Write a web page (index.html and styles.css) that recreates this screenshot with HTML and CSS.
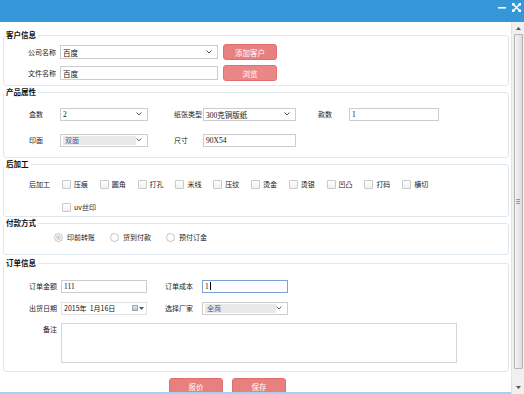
FILE: index.html
```html
<!DOCTYPE html>
<html lang="zh-CN">
  <head>
    <meta charset="UTF-8" />
    <title>订单</title>
    <link rel="stylesheet" href="styles.css">
  </head>
  <body>
    <div class="window">
      <div class="titlebar">
        <svg class="tb-icon" width="9" height="9" viewBox="0 0 9 9"><rect x="0" y="4" width="8" height="1.6" fill="#fff"/></svg>
        <svg class="tb-icon" width="9" height="9" viewBox="0 0 9 9"><path d="M1 1 L8 8 M8 1 L1 8" stroke="#fff" stroke-width="1.6"/><rect x="0" y="0" width="2.5" height="2.5" fill="#fff"/><rect x="6.5" y="0" width="2.5" height="2.5" fill="#fff"/><rect x="0" y="6.5" width="2.5" height="2.5" fill="#fff"/><rect x="6.5" y="6.5" width="2.5" height="2.5" fill="#fff"/></svg>
      </div>
      <div class="main">
        <div class="content">
          <!-- 客户信息 -->
          <fieldset class="group customer">
            <legend>客户信息</legend>
            <div class="row">
              <span class="lbl">公司名称</span>
              <div class="select w-158"><span class="val">百度</span><svg class="chev" width="6" height="4" viewBox="0 0 6 4"><path d="M0.5 0.5 L3 3 L5.5 0.5" fill="none" stroke="#555" stroke-width="1"/></svg></div>
              <button class="btn">添加客户</button>
            </div>
            <div class="row">
              <span class="lbl">文件名称</span>
              <div class="input w-158"><span class="val">百度</span></div>
              <button class="btn light">浏览</button>
            </div>
          </fieldset>

          <!-- 产品属性 -->
          <fieldset class="group product">
            <legend>产品属性</legend>
            <div class="row">
              <span class="lbl-l w-31">盒数</span>
              <div class="select w-88"><span class="val">2</span><svg class="chev" width="6" height="4" viewBox="0 0 6 4"><path d="M0.5 0.5 L3 3 L5.5 0.5" fill="none" stroke="#555" stroke-width="1"/></svg></div>
              <span class="lbl-l w-29 gap-26">纸张类型</span>
              <div class="select w-93"><span class="val">300克铜版纸</span><svg class="chev" width="6" height="4" viewBox="0 0 6 4"><path d="M0.5 0.5 L3 3 L5.5 0.5" fill="none" stroke="#555" stroke-width="1"/></svg></div>
              <span class="lbl-l w-31 gap-22">款数</span>
              <div class="input w-90"><span class="val">1</span></div>
            </div>
            <div class="row">
              <span class="lbl-l w-31">印面</span>
              <div class="select w-88"><span class="val hl">双面</span><svg class="chev" width="6" height="4" viewBox="0 0 6 4"><path d="M0.5 0.5 L3 3 L5.5 0.5" fill="none" stroke="#555" stroke-width="1"/></svg></div>
              <span class="lbl-l w-29 gap-26">尺寸</span>
              <div class="input w-93"><span class="val">90X54</span></div>
            </div>
          </fieldset>

          <!-- 后加工 -->
          <fieldset class="group process">
            <legend>后加工</legend>
            <div class="row">
              <span class="lbl-l w-33 pad-25">后加工</span>
              <span class="check"><span class="box"></span>压痕</span>
              <span class="check"><span class="box"></span>圆角</span>
              <span class="check"><span class="box"></span>打孔</span>
              <span class="check"><span class="box"></span>米线</span>
              <span class="check"><span class="box"></span>压纹</span>
              <span class="check"><span class="box"></span>烫金</span>
              <span class="check"><span class="box"></span>烫银</span>
              <span class="check"><span class="box"></span>凹凸</span>
              <span class="check"><span class="box"></span>打码</span>
              <span class="check"><span class="box"></span>横切</span>
            </div>
            <div class="row pad-58">
              <span class="check"><span class="box"></span>uv丝印</span>
            </div>
          </fieldset>

          <!-- 付款方式 -->
          <fieldset class="group payment">
            <legend>付款方式</legend>
            <div class="row">
              <span class="radio"><span class="dot on"></span>印前转账</span>
              <span class="radio"><span class="dot"></span>货到付款</span>
              <span class="radio"><span class="dot"></span>预付订金</span>
            </div>
          </fieldset>

          <!-- 订单信息 -->
          <fieldset class="group order">
            <legend>订单信息</legend>
            <div class="row">
              <span class="lbl">订单金额</span>
              <div class="input w-86"><span class="val">111</span></div>
              <span class="lbl-l w-37 gap-18">订单成本</span>
              <div class="input w-86 focus"><span class="val">1</span><span class="caret"></span></div>
            </div>
            <div class="row">
              <span class="lbl">出货日期</span>
              <div class="input w-86 date"><span class="val">2015年&nbsp;&nbsp;1月16日</span><span class="cal"></span><svg width="5" height="3" viewBox="0 0 5 3"><path d="M0 0 L5 0 L2.5 3 Z" fill="#3a5a8c"/></svg></div>
              <span class="lbl-l w-37 gap-18">选择厂家</span>
              <div class="select w-86"><span class="val hl wide">全商</span><svg class="chev" width="6" height="4" viewBox="0 0 6 4"><path d="M0.5 0.5 L3 3 L5.5 0.5" fill="none" stroke="#555" stroke-width="1"/></svg></div>
            </div>
            <div class="row note">
              <span class="lbl">备注</span>
              <div class="textarea"></div>
            </div>
          </fieldset>

          <div class="actions">
            <button class="btn big">报价</button>
            <button class="btn big">保存</button>
          </div>
        </div>

        <div class="scrollbar">
          <div class="sb-btn"><svg width="5" height="3" viewBox="0 0 5 3"><path d="M0 3 L5 3 L2.5 0 Z" fill="#555"/></svg></div>
          <div class="sb-thumb"><span class="grip"></span></div>
          <div class="sb-btn"><svg width="5" height="3" viewBox="0 0 5 3"><path d="M0 0 L5 0 L2.5 3 Z" fill="#555"/></svg></div>
        </div>
      </div>
    </div>
  </body>
</html>
```

FILE: styles.css
```css
/* Общие стили */
* {
  margin: 0;
  padding: 0;
  box-sizing: border-box;
}

body {
  width: 524px;
  height: 394px;
  overflow: hidden;
  background: #fff;
  font-family: "Noto Sans CJK SC", "Noto Sans", sans-serif;
  font-size: 7px;
  color: #222;
}

.window {
  width: 524px;
  height: 394px;
  display: flex;
  flex-direction: column;
}

/* Заголовок окна */
.titlebar {
  height: 22px;
  background: #3596d8;
  display: flex;
  justify-content: flex-end;
  align-items: flex-start;
  gap: 5px;
  padding: 3px 3px 0 0;
}

.main {
  flex: 1;
  display: flex;
  min-height: 0;
}

.content {
  width: 511px;
  padding: 8px 2px 0 3px;
  overflow: hidden;
  border-bottom: 2px solid #a3d1f3;
}

/* Группы */
.group {
  margin: 0 0 1px;
  border: 1px solid #dfe8ef;
  border-radius: 3px;
  padding: 0;
  min-inline-size: 0;
}

.group legend {
  font-weight: bold;
  font-size: 7.5px;
  line-height: 10px;
  height: 10px;
  padding: 0 2px;
  color: #111;
}

.row {
  display: flex;
  align-items: center;
  height: 14px;
}

.customer {
  padding: 4px 0 4px;
}

.customer .row {
  height: 16px;
}

.customer .row + .row {
  margin-top: 5px;
}

.product {
  padding: 10px 0 10px;
}

.product .row {
  padding-left: 25px;
}

.product .row + .row {
  margin-top: 12px;
}

.process {
  padding: 8px 0 2px;
}

.process .row + .row {
  margin-top: 9px;
}

.payment {
  padding: 2px 0 10px;
}

.payment .row {
  padding-left: 50px;
}

.order {
  margin-top: 3px;
  padding: 11px 0 8px;
}

.order .row + .row {
  margin-top: 8px;
}

.order .note {
  height: 40px;
  align-items: flex-start;
}

/* Подписи */
.lbl {
  width: 53px;
  margin-right: 4px;
  text-align: right;
  white-space: nowrap;
}

.customer .lbl {
  width: 52px;
}

.note .lbl {
  padding-top: 1px;
}

.lbl-l {
  white-space: nowrap;
}

.w-29 { width: 29px; }
.w-31 { width: 31px; }
.w-33 { width: 33px; }
.w-37 { width: 37px; }
.gap-18 { margin-left: 18px; }
.gap-22 { margin-left: 22px; }
.gap-26 { margin-left: 26px; }
.pad-25 { margin-left: 25px; }
.pad-58 { padding-left: 58px; }

/* Поля */
.input,
.select {
  height: 13px;
  border: 1px solid #cdcdcd;
  background: #fff;
  display: flex;
  align-items: center;
  padding: 0 2px;
  font-family: "Liberation Serif", "Noto Sans CJK SC", serif;
  font-size: 7.5px;
  color: #111;
  white-space: nowrap;
}

.select {
  justify-content: space-between;
  padding-right: 5px;
}

.w-86 { width: 86px; }
.w-88 { width: 88px; }
.w-90 { width: 90px; }
.w-93 { width: 93px; }
.w-158 { width: 158px; }

.customer .input,
.customer .select {
  height: 14px;
}

.val.hl {
  background: #e9e9e9;
  color: #3b5c94;
  font-family: "Noto Sans CJK SC", sans-serif;
  font-size: 7px;
  width: 76px;
  height: 9px;
  line-height: 9px;
  padding-left: 2px;
}

.val.hl.wide {
  width: 73px;
}

.input.focus {
  border-color: #7ea3d3;
}

.caret {
  display: inline-block;
  width: 1px;
  height: 8px;
  background: #000;
  margin-left: 1px;
}

.input.date {
  border-color: #e2e2e2;
  font-family: "Noto Sans CJK SC", sans-serif;
  font-size: 7px;
}

.cal {
  width: 6px;
  height: 6px;
  margin-left: auto;
  margin-right: 1px;
  border: 1px solid #9aa8b8;
  background: linear-gradient(#dfe6ee, #b9c4d2);
}

.textarea {
  width: 396px;
  height: 40px;
  border: 1px solid #d6d6d6;
  background: #fff;
}

/* Кнопки */
.btn {
  width: 54px;
  height: 16px;
  margin-left: 5px;
  border: 1px solid #e26f6f;
  border-radius: 3px;
  background: #e98080;
  color: #fff;
  font-family: "Noto Sans CJK SC", sans-serif;
  font-size: 7.5px;
}

.btn.light {
  background: #ea8686;
}

.actions {
  display: flex;
  gap: 9px;
  margin: 6px 0 0 166px;
}

.actions .btn {
  margin-left: 0;
  height: 18px;
  padding-bottom: 2px;
}

/* Флажки и переключатели */
.check {
  display: flex;
  align-items: center;
  width: 37.8px;
  white-space: nowrap;
}

.box {
  width: 9px;
  height: 9px;
  margin-right: 3px;
  border: 1px solid #c9c9c9;
  border-radius: 1px;
  background: linear-gradient(#fff, #f1f1f1);
}

.radio {
  display: flex;
  align-items: center;
  width: 56px;
  white-space: nowrap;
}

.dot {
  width: 9px;
  height: 9px;
  margin-right: 4px;
  border: 1px solid #c4c4c4;
  border-radius: 50%;
  background: #fff;
  display: flex;
  align-items: center;
  justify-content: center;
}

.dot.on::after {
  content: "";
  width: 5px;
  height: 5px;
  border-radius: 50%;
  background: #d6d6d6;
}

/* Полоса прокрутки */
.scrollbar {
  width: 13px;
  background: #f0f0f0;
  border-left: 1px solid #e4e4e4;
  display: flex;
  flex-direction: column;
  align-items: center;
  padding: 2px 0;
}

.sb-btn {
  width: 9px;
  height: 9px;
  display: flex;
  align-items: center;
  justify-content: center;
}

.sb-thumb {
  flex: 1;
  width: 9px;
  margin: 1px 0 14px;
  border: 1px solid #b4b4b4;
  border-radius: 1px;
  background: linear-gradient(90deg, #f4f4f4, #dcdcdc);
  display: flex;
  align-items: center;
  justify-content: center;
}

.grip {
  width: 4px;
  height: 5px;
  border-top: 1px solid #999;
  border-bottom: 1px solid #999;
  background: linear-gradient(#999, #999) center / 4px 1px no-repeat;
}
```
